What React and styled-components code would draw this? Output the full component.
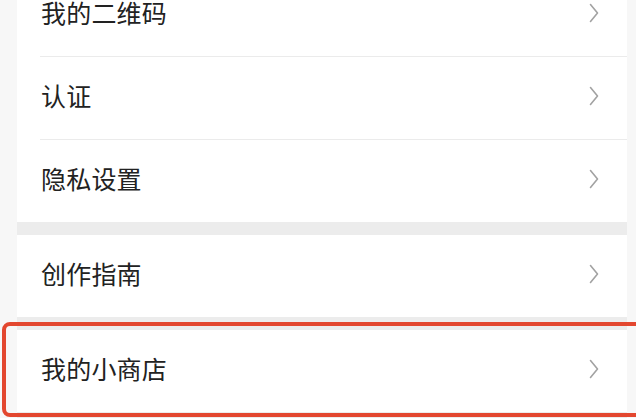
import React from "react";
import styled, { createGlobalStyle } from "styled-components";

const Global = createGlobalStyle`
  html, body {
    margin: 0;
    padding: 0;
    background: #f7f7f7;
    overflow: hidden;
  }
  body {
    font-family: "Noto Sans CJK SC", "Noto Sans", sans-serif;
  }
`;

const Page = styled.div`
  width: 636px;
  height: 418px;
  padding: 0 9px 0 17px;
  box-sizing: border-box;
  overflow: hidden;
`;

const Column = styled.div`
  background: #ececec;
  margin-top: -26px;
  display: flex;
  flex-direction: column;
  gap: 13px;
  padding-bottom: 20px;
`;

const Group = styled.div`
  background: #ffffff;
  display: flex;
  flex-direction: column;
`;

const Row = styled.div`
  position: relative;
  height: 82px;
  display: flex;
  align-items: center;
  justify-content: space-between;
  padding: 0 28px 0 24px;
  box-sizing: border-box;
`;

const Label = styled.span`
  font-size: 25px;
  line-height: 30px;
  color: #222222;
  letter-spacing: 0.2px;
  margin-bottom: 6px;
`;

const Arrow = styled.svg`
  display: block;
  margin-bottom: 5px;
`;

const Divider = styled.div`
  height: 1px;
  margin-left: 23px;
  background: #ebebeb;
`;

const Highlight = styled.div`
  position: absolute;
  top: -8px;
  bottom: -5px;
  left: -15px;
  right: -30px;
  border: 4px solid #e3472f;
  border-radius: 8px;
  pointer-events: none;
`;

const Chevron = () => (
  <Arrow width="10" height="20" viewBox="0 0 10 20" fill="none">
    <polyline
      points="1.5,1.5 8.5,10 1.5,18.5"
      stroke="#a2a2a2"
      strokeWidth="1.6"
      strokeLinecap="round"
      strokeLinejoin="round"
    />
  </Arrow>
);

const Item = ({ label, highlighted }) => (
  <Row>
    <Label>{label}</Label>
    <Chevron />
    {highlighted && <Highlight />}
  </Row>
);

const groups = [
  ["我的二维码", "认证", "隐私设置"],
  ["创作指南"],
  ["我的小商店"],
];

export default function App() {
  return (
    <>
      <Global />
      <Page>
        <Column>
          {groups.map((items, gi) => (
            <Group key={gi}>
              {items.map((label, i) => (
                <React.Fragment key={label}>
                  {i > 0 && <Divider />}
                  <Item label={label} highlighted={label === "我的小商店"} />
                </React.Fragment>
              ))}
            </Group>
          ))}
        </Column>
      </Page>
    </>
  );
}
